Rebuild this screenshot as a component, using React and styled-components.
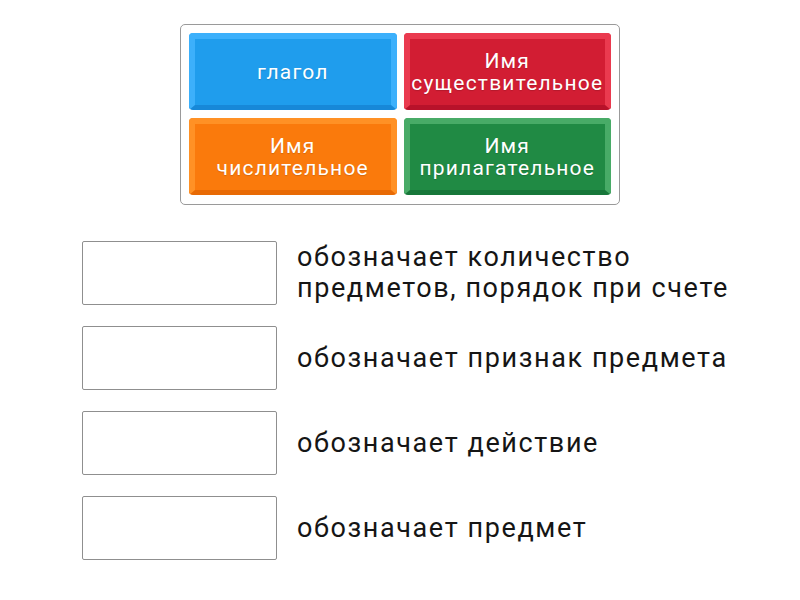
import React from "react";
import styled, { createGlobalStyle } from "styled-components";

const Global = createGlobalStyle`
  html, body { margin: 0; padding: 0; background: #fff; }
  body { font-family: Roboto, "Liberation Sans", sans-serif; }
`;

const Page = styled.div`
  width: 800px;
  height: 600px;
  display: flex;
  flex-direction: column;
  align-items: center;
  padding-top: 24px;
  box-sizing: border-box;
`;

const Bank = styled.div`
  width: 440px;
  box-sizing: border-box;
  border: 1px solid #9a9a9a;
  border-radius: 5px;
  padding: 8px 8px 9px 8px;
  display: grid;
  grid-template-columns: 1fr 1fr;
  gap: 8px 7px;
`;

const Tile = styled.div`
  height: 77px;
  box-sizing: border-box;
  border-radius: 4px;
  background: ${(p) => p.$face};
  border-style: solid;
  border-width: 6px 6px 5px 6px;
  border-color: ${(p) => p.$light} ${(p) => p.$light} ${(p) => p.$dark} ${(p) => p.$light};
  display: flex;
  align-items: center;
  justify-content: center;
  text-align: center;
  color: #fff;
  font-family: Roboto, "Liberation Sans", sans-serif;
  font-size: 21px;
  line-height: 22px;
  letter-spacing: 1.2px;
  text-shadow: 0 1px 1px rgba(0, 0, 0, 0.15);
`;

const Rows = styled.div`
  align-self: stretch;
  margin-top: 36px;
  padding-left: 82px;
  display: flex;
  flex-direction: column;
  gap: 21px;
`;

const Row = styled.div`
  display: flex;
  align-items: center;
  gap: 20px;
`;

const Slot = styled.div`
  width: 195px;
  height: 64px;
  box-sizing: border-box;
  border: 1px solid #8f8f8f;
  border-radius: 2px;
  background: #fff;
  flex-shrink: 0;
`;

const Clue = styled.div`
  font-family: Roboto, "Liberation Sans", sans-serif;
  font-size: 27px;
  line-height: 31px;
  letter-spacing: 1.6px;
  color: #151515;
`;

const tiles = [
  { text: "глагол", face: "#1f9ded", light: "#3cb0fb", dark: "#1788d8" },
  { text: "Имя\nсуществительное", face: "#d21d33", light: "#ea3a4f", dark: "#b8122a" },
  { text: "Имя\nчислительное", face: "#fa7a0c", light: "#ff9125", dark: "#e86a05" },
  { text: "Имя\nприлагательное", face: "#208a44", light: "#48ab67", dark: "#17773a" },
];

const clues = [
  "обозначает количество\nпредметов, порядок при счете",
  "обозначает признак предмета",
  "обозначает действие",
  "обозначает предмет",
];

const Lines = ({ text }) =>
  text.split("\n").map((l, i, a) => (
    <React.Fragment key={i}>
      {l}
      {i < a.length - 1 && <br />}
    </React.Fragment>
  ));

export default function App() {
  return (
    <>
      <Global />
      <Page>
        <Bank>
          {tiles.map((t) => (
            <Tile key={t.text} $face={t.face} $light={t.light} $dark={t.dark}>
              <span>
                <Lines text={t.text} />
              </span>
            </Tile>
          ))}
        </Bank>
        <Rows>
          {clues.map((c) => (
            <Row key={c}>
              <Slot />
              <Clue>
                <Lines text={c} />
              </Clue>
            </Row>
          ))}
        </Rows>
      </Page>
    </>
  );
}
